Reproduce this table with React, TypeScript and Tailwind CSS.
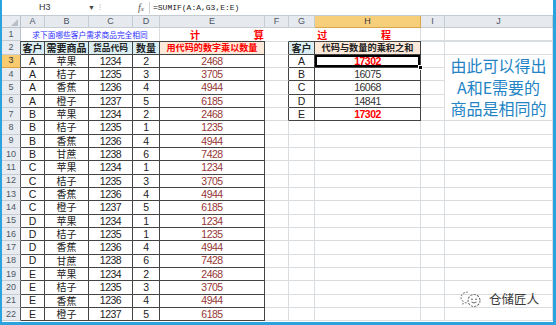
import React from 'react';

const rows: [string, string, string, string, string][] = [
  ['A', '苹果', '1234', '2', '2468'],
  ['A', '桔子', '1235', '3', '3705'],
  ['A', '香蕉', '1236', '4', '4944'],
  ['A', '橙子', '1237', '5', '6185'],
  ['B', '苹果', '1234', '2', '2468'],
  ['B', '桔子', '1235', '1', '1235'],
  ['B', '香蕉', '1236', '4', '4944'],
  ['B', '甘蔗', '1238', '6', '7428'],
  ['C', '苹果', '1234', '1', '1234'],
  ['C', '桔子', '1235', '3', '3705'],
  ['C', '香蕉', '1236', '4', '4944'],
  ['C', '橙子', '1237', '5', '6185'],
  ['D', '苹果', '1234', '1', '1234'],
  ['D', '桔子', '1235', '1', '1235'],
  ['D', '香蕉', '1236', '4', '4944'],
  ['D', '甘蔗', '1238', '6', '7428'],
  ['E', '苹果', '1234', '2', '2468'],
  ['E', '桔子', '1235', '3', '3705'],
  ['E', '香蕉', '1236', '4', '4944'],
  ['E', '橙子', '1237', '5', '6185'],
];

const right: [string, string, boolean][] = [
  ['A', '17302', true],
  ['B', '16075', false],
  ['C', '16068', false],
  ['D', '14841', false],
  ['E', '17302', true],
];

const COLS = ['A', 'B', 'C', 'D', 'E', 'F', 'G', 'H', 'I', 'J'];

const GRID = 'border-r border-b border-[#dadde0]';
const TD = 'flex items-center justify-center leading-none border-r border-b border-[#444444]';
const NUM = "font-['Liberation_Sans',sans-serif] text-[10.5px] tracking-[-0.5px]";
const CJK = "font-['Noto_Sans_CJK_SC',sans-serif] text-[10px]";

function Gutter({ n }: { n: number }) {
  const sel = n === 3;
  const dark = n >= 2;
  return (
    <div
      className={
        'flex items-center justify-center leading-none text-[9px] border-b ' +
        (sel ? 'bg-[#f7cb6e] text-[#333] border-b-[#d9a441] ' : 'bg-[#e8ebef] text-[#4d5866] border-b-[#c6ccd3] ') +
        (dark ? 'border-r border-r-[#555555]' : 'border-r border-r-[#b9c0c9]')
      }
    >
      {n}
    </div>
  );
}

export default function App() {
  return (
    <div className="w-[556px] h-[325px] bg-white border-l-2 border-r-[3px] border-b-[3px] border-[#2aa3de] overflow-hidden relative leading-none font-['Liberation_Sans','Noto_Sans_CJK_SC',sans-serif] text-[#222]">
      {/* formula bar */}
      <div className="h-[16px] flex items-center border-b border-[#c5cbd3] bg-white">
        <div className="w-[96px] h-full flex items-center">
          <span className="pl-[37px] text-[9px] text-[#333]">H3</span>
          <span className="ml-auto pr-[3px] text-[7px] text-[#444]">▼</span>
        </div>
        <div className="w-[35px] h-full flex items-center pl-[1px]">
          <span className="text-[8px] text-[#a0a8b2] leading-none">⁝</span>
        </div>
        <div className="w-[17px] h-[12px] flex items-center justify-center border-r border-[#d0d4da]">
          <span className="font-['Liberation_Serif',serif] italic text-[10px] text-[#555] leading-none">f</span>
          <span className="font-['Liberation_Serif',serif] italic text-[7px] text-[#555] leading-none mt-[3px]">x</span>
        </div>
        <div className="pl-[3px] font-['Liberation_Mono',monospace] text-[8px] text-[#222]">=SUMIF(A:A,G3,E:E)</div>
      </div>

      <div className="grid grid-cols-[19px_24px_44px_44px_27px_105px_24px_26px_106px_24px_108px] grid-rows-[12px_repeat(22,13.33px)]">
        {/* header row */}
        <div className="bg-[#e8ebef] border-r border-b border-[#b9c0c9] relative">
          <svg className="absolute right-[2px] bottom-[1px]" width="7" height="7" viewBox="0 0 7 7">
            <polygon points="7,0 7,7 0,7" fill="#b8bec7" />
          </svg>
        </div>
        {COLS.map((c) => (
          <div
            key={c}
            className={
              c === 'H'
                ? 'flex items-center justify-center leading-none text-[9px] text-[#3a3a3a] bg-[#f7cf7a] border-r border-b border-[#dba54a]'
                : 'flex items-center justify-center leading-none text-[9px] text-[#4a5566] bg-[#e6e9ed] border-r border-b border-[#c6ccd3]'
            }
          >
            {c}
          </div>
        ))}

        {/* row 1 */}
        <Gutter n={1} />
        <div className="col-span-4 border-r border-[#dadde0] flex items-center justify-center leading-none font-['Noto_Sans_CJK_SC',sans-serif] text-[7.7px] text-[#2d2dff]">
          求下面哪些客户需求商品完全相同
        </div>
        <div className="col-span-4 border-r border-[#dadde0] flex items-center justify-between leading-none pl-[30px] pr-[29px] font-['Noto_Sans_CJK_SC',sans-serif] text-[10px] font-bold text-[#ff0000]">
          <span>计</span>
          <span>算</span>
          <span>过</span>
          <span>程</span>
        </div>
        <div className={GRID} />
        <div className={GRID} />

        {/* row 2 */}
        <Gutter n={2} />
        <div className={TD + ' border-t bg-[#daeef3] font-bold ' + CJK}>客户</div>
        <div className={TD + ' border-t bg-[#daeef3] font-bold ' + CJK}>需要商品</div>
        <div className={TD + " border-t bg-[#daeef3] font-bold font-['Noto_Sans_CJK_SC',sans-serif] text-[8.75px]"}>货品代码</div>
        <div className={TD + ' border-t bg-[#daeef3] font-bold ' + CJK}>数量</div>
        <div className={TD + " border-t bg-[#fde9d9] font-bold text-[#ff0000] font-['Noto_Sans_CJK_SC',sans-serif] text-[9.1px]"}>用代码的数字乘以数量</div>
        <div className="border-t border-t-[#dadde0] border-b border-b-[#dadde0] border-r border-r-[#444444]" />
        <div className={TD + ' border-t bg-[#daeef3] font-bold ' + CJK}>客户</div>
        <div className={TD + " border-t bg-[#fde9d9] font-bold font-['Noto_Sans_CJK_SC',sans-serif] text-[9.2px]"}>代码与数量的乘积之和</div>
        <div className={GRID + ' border-t'} />
        <div className={GRID + ' border-t'} />

        {/* rows 3..22 */}
        {rows.map((r, i) => {
          const n = i + 3;
          const inRight = i < 5;
          return (
            <React.Fragment key={n}>
              <Gutter n={n} />
              <div className={TD + " font-['Liberation_Sans',sans-serif] text-[10.5px]"}>{r[0]}</div>
              <div className={TD + ' ' + CJK}>{r[1]}</div>
              <div className={TD + ' ' + NUM}>{r[2]}</div>
              <div className={TD + ' ' + NUM}>{r[3]}</div>
              <div className={TD + ' text-[#953735] ' + NUM}>{r[4]}</div>
              {inRight ? (
                <div className="border-b border-b-[#dadde0] border-r border-r-[#444444]" />
              ) : (
                <div className={GRID} />
              )}
              {inRight ? (
                <div className={TD + " font-['Liberation_Sans',sans-serif] text-[10.5px]"}>{right[i][0]}</div>
              ) : (
                <div className={GRID} />
              )}
              {inRight ? (
                <div
                  className={
                    TD +
                    ' ' +
                    NUM +
                    (right[i][2] ? ' font-bold text-[#ff0000]' : ' text-[#333]') +
                    (i === 0 ? ' relative shadow-[inset_0_0_0_2px_#000]' : '')
                  }
                >
                  {right[i][1]}
                  {i === 0 && (
                    <span className="absolute right-[-3px] bottom-[-3px] w-[5px] h-[5px] bg-black border border-white" />
                  )}
                </div>
              ) : (
                <div className={GRID} />
              )}
              <div className={GRID} />
              {i === 0 && (
                <div className="row-span-5 bg-white border-r border-b border-[#dadde0] flex flex-col items-center justify-center font-['Noto_Sans_CJK_SC',sans-serif] text-[16px] leading-[21.5px] text-[#2383c4]">
                  <span>由此可以得出</span>
                  <span>A和E需要的</span>
                  <span>商品是相同的</span>
                </div>
              )}
              {i >= 5 && <div className={GRID} />}
            </React.Fragment>
          );
        })}
      </div>

      {/* watermark */}
      <div className="absolute left-[458px] top-[290px] flex items-center gap-[7px]">
        <svg width="22" height="18" viewBox="0 0 22 18" fill="none">
          <path d="M8 2 C3.5 2 1 4.8 1 7.5 C1 9.2 2 10.6 3.4 11.6 L2.8 13.8 L5.4 12.6 C6.2 12.9 7 13 8 13" stroke="#8a8a8a" strokeWidth="1.1" strokeDasharray="2 1.2" />
          <circle cx="14" cy="10.5" r="6" stroke="#6e6e6e" strokeWidth="1.1" strokeDasharray="2.2 1.2" />
          <circle cx="12" cy="9.3" r="0.8" fill="#555" />
          <circle cx="16" cy="9.3" r="0.8" fill="#555" />
          <path d="M11.5 12 Q14 14 16.5 12" stroke="#555" strokeWidth="0.9" />
        </svg>
        <span className="font-['Noto_Sans_CJK_SC',sans-serif] text-[12.5px] leading-none text-[#3a3a3a] [text-shadow:0_0_2px_#fff,0_0_1px_#fff]">仓储匠人</span>
      </div>
    </div>
  );
}
